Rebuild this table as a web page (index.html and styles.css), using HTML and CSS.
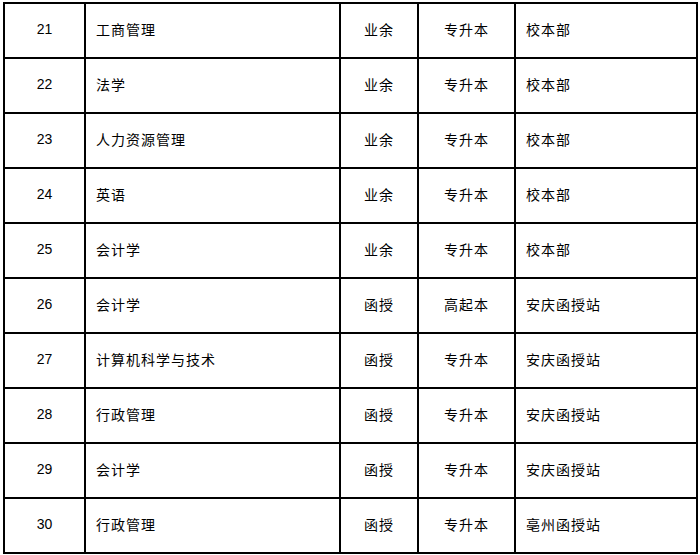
FILE: index.html
```html
<!DOCTYPE html>
<html lang="zh-CN">
<head>
<meta charset="utf-8">
<title>专业列表</title>
<link rel="stylesheet" href="styles.css">
</head>
<body>
<table class="grid">
  <colgroup>
    <col class="c-no"><col class="c-major"><col class="c-form"><col class="c-level"><col class="c-site">
  </colgroup>
  <tbody>
    <tr><td class="num">21</td><td class="txt">工商管理</td><td class="mid">业余</td><td class="mid">专升本</td><td class="txt site">校本部</td></tr>
    <tr><td class="num">22</td><td class="txt">法学</td><td class="mid">业余</td><td class="mid">专升本</td><td class="txt site">校本部</td></tr>
    <tr><td class="num">23</td><td class="txt">人力资源管理</td><td class="mid">业余</td><td class="mid">专升本</td><td class="txt site">校本部</td></tr>
    <tr><td class="num">24</td><td class="txt">英语</td><td class="mid">业余</td><td class="mid">专升本</td><td class="txt site">校本部</td></tr>
    <tr><td class="num">25</td><td class="txt">会计学</td><td class="mid">业余</td><td class="mid">专升本</td><td class="txt site">校本部</td></tr>
    <tr><td class="num">26</td><td class="txt">会计学</td><td class="mid">函授</td><td class="mid">高起本</td><td class="txt site">安庆函授站</td></tr>
    <tr><td class="num">27</td><td class="txt">计算机科学与技术</td><td class="mid">函授</td><td class="mid">专升本</td><td class="txt site">安庆函授站</td></tr>
    <tr><td class="num">28</td><td class="txt">行政管理</td><td class="mid">函授</td><td class="mid">专升本</td><td class="txt site">安庆函授站</td></tr>
    <tr><td class="num">29</td><td class="txt">会计学</td><td class="mid">函授</td><td class="mid">专升本</td><td class="txt site">安庆函授站</td></tr>
    <tr><td class="num">30</td><td class="txt">行政管理</td><td class="mid">函授</td><td class="mid">专升本</td><td class="txt site">亳州函授站</td></tr>
  </tbody>
</table>
</body>
</html>
```

FILE: styles.css
```css
html, body {
  margin: 0;
  padding: 0;
  background: #ffffff;
}

body {
  padding: 2px 0 0 3px;
  font-family: "Noto Sans CJK SC", "Noto Sans", sans-serif;
  color: #000000;
}

.grid {
  border-collapse: separate;
  border-spacing: 0;
  table-layout: fixed;
  width: 695px;
  border-top: 2px solid #000;
  border-left: 2px solid #000;
}

.c-no { width: 81px; }
.c-major { width: 255px; }
.c-form { width: 78px; }
.c-level { width: 97px; }
.c-site { width: 182px; }

.grid td {
  box-sizing: border-box;
  height: 55px;
  padding: 0 0 4px 0;
  border-right: 2px solid #000;
  border-bottom: 2px solid #000;
  vertical-align: middle;
  font-size: 14px;
  line-height: 18px;
  letter-spacing: 1px;
  white-space: nowrap;
}

.grid td.num {
  text-align: center;
  font-family: "Liberation Sans", Arial, sans-serif;
  font-size: 14px;
  letter-spacing: 0;
  padding-bottom: 3px;
}

.grid td.txt {
  text-align: left;
  padding-left: 10px;
}

.grid td.site {
  padding-left: 10px;
}

.grid td.mid {
  text-align: center;
}
```
